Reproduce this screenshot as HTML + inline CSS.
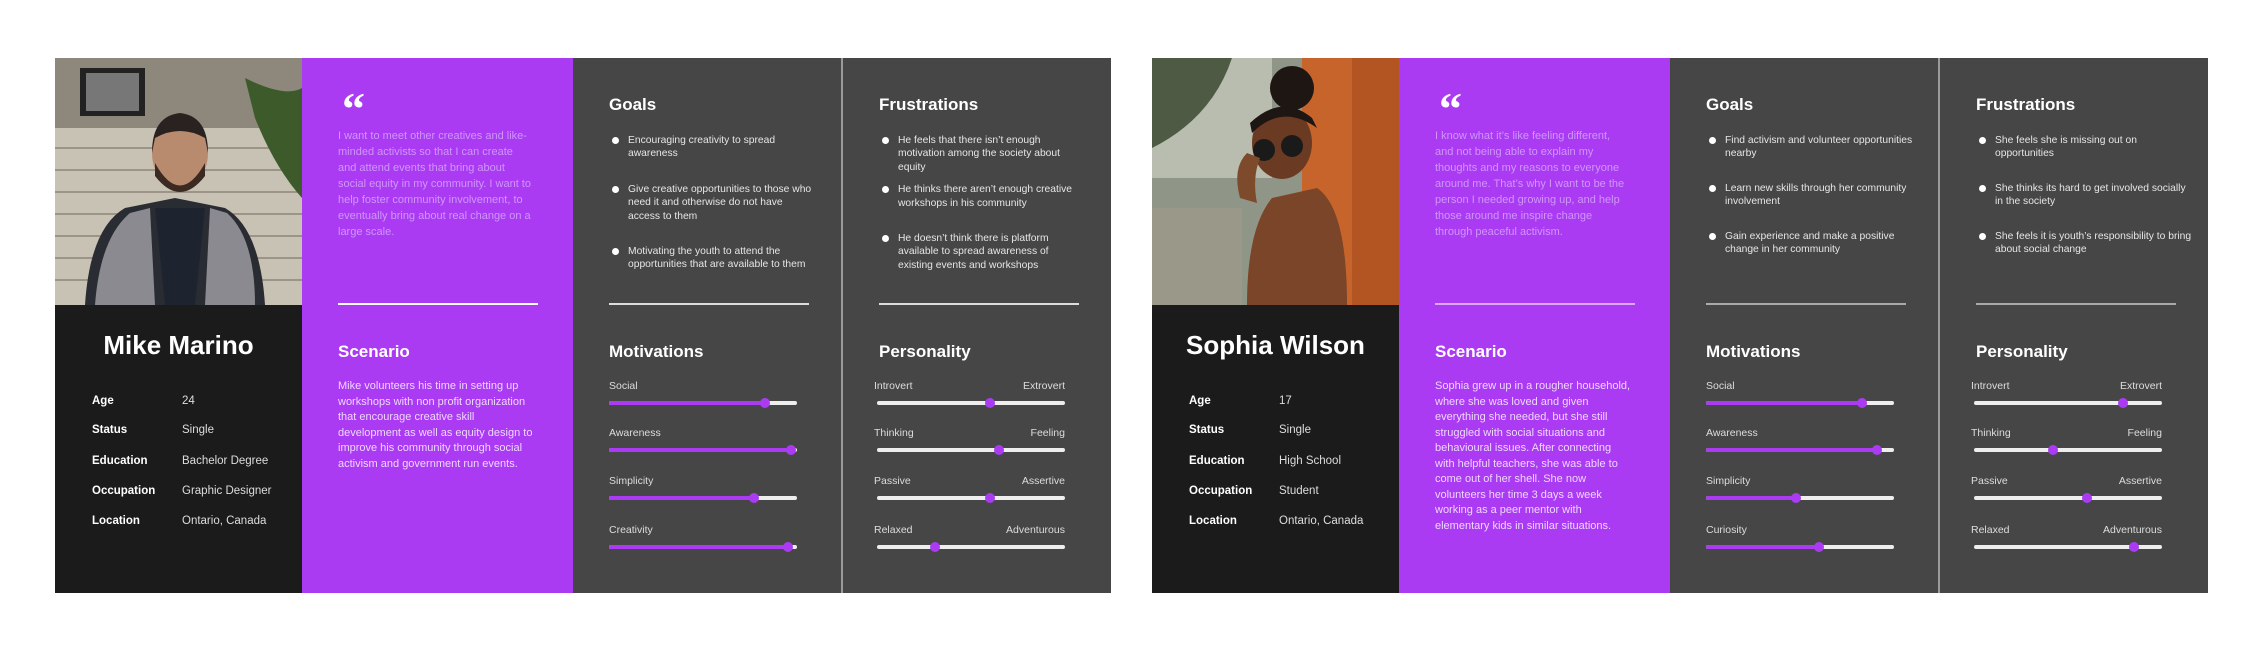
<!DOCTYPE html>
<html><head><meta charset="utf-8"><style>
*{margin:0;padding:0;box-sizing:border-box}
body{width:2262px;height:653px;background:#fff;position:relative;overflow:hidden;font-family:"Liberation Sans",sans-serif}
.card{position:absolute;top:58px;width:1056px;height:535px}
.col{position:absolute;top:0;height:535px}
.photo{left:0;width:247px;height:247px;overflow:hidden}
.info{left:0;top:247px;width:247px;height:288px;background:#1b1b1b}
.pur{left:247px;width:271px;background:#aa3bf3}
.g{left:518px;width:268px;background:#464646}
.sep{left:786px;width:2px;background:#9a9a9a}
.f{left:788px;width:268px;background:#464646}
.a{position:absolute;white-space:nowrap}
.name{left:0;width:247px;text-align:center;top:25px;font-size:26px;font-weight:bold;color:#fff}
.lb{left:37px;font-size:11.5px;font-weight:bold;color:#fff}
.vl{left:127px;font-size:11.5px;color:#ddd}
.q{left:40px;top:28px;font-size:46px;font-weight:bold;color:#fff;font-family:"Liberation Serif",serif;line-height:46px}
.qt{left:36px;top:70px;width:196px;white-space:normal;font-size:11px;line-height:16px;color:#d095fa}
.hr{position:absolute;left:36px;width:200px;top:245px;height:1.5px;background:#fff}
.h{font-size:17px;font-weight:bold;color:#fff}
.st{left:36px;top:321px;width:196px;white-space:normal;font-size:11px;line-height:15.5px;color:#efd6ff}
ul{position:absolute;left:39px;width:205px;list-style:none}
li{position:relative;padding-left:16px;font-size:10.3px;line-height:13.4px;color:#e6e6e6}
li:before{content:"";position:absolute;left:0;top:3px;width:7px;height:7px;border-radius:50%;background:#fff}
.sl{position:absolute;font-size:10.5px;color:#ddd}
.tr{position:absolute;height:4px;border-radius:2px;background:#eee}
.fill{position:absolute;left:0;top:0;height:4px;border-radius:2px;background:#aa3bf3}
.kn{position:absolute;top:-3px;width:10px;height:10px;margin-left:-5px;border-radius:50%;background:#aa3bf3}
</style></head><body>

<!-- Card 1 -->
<div class="card" style="left:55px">
 <div class="col photo">
  <svg width="247" height="247" viewBox="0 0 247 247">
   <rect width="247" height="247" fill="#8e877c"/>
   <rect x="0" y="70" width="247" height="177" fill="#c8c2b4"/>
   <g stroke="#9c9486" stroke-width="2">
    <line x1="0" y1="90" x2="247" y2="90"/><line x1="0" y1="112" x2="247" y2="112"/><line x1="0" y1="134" x2="247" y2="134"/><line x1="0" y1="156" x2="247" y2="156"/><line x1="0" y1="178" x2="247" y2="178"/><line x1="0" y1="200" x2="247" y2="200"/><line x1="0" y1="222" x2="247" y2="222"/>
   </g>
   <rect x="25" y="10" width="65" height="48" fill="#222"/><rect x="31" y="15" width="53" height="38" fill="#777"/>
   <path d="M190 20 Q230 40 247 30 L247 140 Q220 110 200 60Z" fill="#3d5a2a"/>
   <path d="M30 247 Q35 170 70 150 L120 140 L170 150 Q205 170 210 247Z" fill="#2a2c33"/>
   <path d="M40 247 Q45 180 75 155 L95 150 L100 247Z M150 247 L155 150 L172 155 Q200 180 200 247Z" fill="#8a8a90"/>
   <path d="M100 150 L150 150 L140 247 L110 247Z" fill="#1d2430"/>
   <ellipse cx="125" cy="95" rx="28" ry="36" fill="#b88b6e"/>
   <path d="M97 95 Q97 58 125 55 Q153 58 153 95 L150 80 Q125 66 100 80Z" fill="#2a2220"/>
   <path d="M100 105 Q125 150 150 105 L150 118 Q125 150 100 118Z" fill="#3a2a22"/>
  </svg>
 </div>
 <div class="col info">
  <div class="a name">Mike Marino</div>
  <div class="a lb" style="top:90px">Age</div><div class="a vl" style="top:90px">24</div>
  <div class="a lb" style="top:119px">Status</div><div class="a vl" style="top:119px">Single</div>
  <div class="a lb" style="top:150px">Education</div><div class="a vl" style="top:150px">Bachelor Degree</div>
  <div class="a lb" style="top:180px">Occupation</div><div class="a vl" style="top:180px">Graphic Designer</div>
  <div class="a lb" style="top:210px">Location</div><div class="a vl" style="top:210px">Ontario, Canada</div>
 </div>
 <div class="col pur">
  <div class="a q">&ldquo;</div>
  <div class="a qt">I want to meet other creatives and like-minded activists so that I can create and attend events that bring about social equity in my community. I want to help foster community involvement, to eventually bring about real change on a large scale.</div>
  <div class="hr"></div>
  <div class="a h" style="left:36px;top:284px">Scenario</div>
  <div class="a st">Mike volunteers his time in setting up workshops with non profit organization that encourage creative skill development as well as equity design to improve his community through social activism and government run events.</div>
 </div>
 <div class="col g">
  <div class="a h" style="left:36px;top:37px">Goals</div>
  <ul style="top:76px">
   <li style="margin-bottom:22px">Encouraging creativity to spread awareness</li>
   <li style="margin-bottom:22px">Give creative opportunities to those who need it and otherwise do not have access to them</li>
   <li>Motivating the youth to attend the opportunities that are available to them</li>
  </ul>
  <div class="hr" style="background:#ddd"></div>
  <div class="a h" style="left:36px;top:284px">Motivations</div>
  <div class="sl" style="left:36px;top:322px">Social</div><div class="tr" style="left:36px;top:343px;width:188px"><div class="fill" style="width:83%"></div><div class="kn" style="left:83%"></div></div>
  <div class="sl" style="left:36px;top:369px">Awareness</div><div class="tr" style="left:36px;top:390px;width:188px"><div class="fill" style="width:97%"></div><div class="kn" style="left:97%"></div></div>
  <div class="sl" style="left:36px;top:417px">Simplicity</div><div class="tr" style="left:36px;top:438px;width:188px"><div class="fill" style="width:77%"></div><div class="kn" style="left:77%"></div></div>
  <div class="sl" style="left:36px;top:466px">Creativity</div><div class="tr" style="left:36px;top:487px;width:188px"><div class="fill" style="width:95%"></div><div class="kn" style="left:95%"></div></div>
 </div>
 <div class="col sep"></div>
 <div class="col f">
  <div class="a h" style="left:36px;top:37px">Frustrations</div>
  <ul style="top:76px;width:200px">
   <li style="margin-bottom:9px">He feels that there isn’t enough motivation among the society about equity</li>
   <li style="margin-bottom:22px">He thinks there aren’t enough creative workshops in his community</li>
   <li>He doesn’t think there is platform available to spread awareness of existing events and workshops</li>
  </ul>
  <div class="hr" style="background:#ddd"></div>
  <div class="a h" style="left:36px;top:284px">Personality</div>
  <div class="sl" style="left:31px;top:322px">Introvert</div><div class="sl" style="left:160px;width:62px;text-align:right;top:322px">Extrovert</div>
  <div class="tr" style="left:34px;top:343px;width:188px"><div class="kn" style="left:60%"></div></div>
  <div class="sl" style="left:31px;top:369px">Thinking</div><div class="sl" style="left:160px;width:62px;text-align:right;top:369px">Feeling</div>
  <div class="tr" style="left:34px;top:390px;width:188px"><div class="kn" style="left:65%"></div></div>
  <div class="sl" style="left:31px;top:417px">Passive</div><div class="sl" style="left:160px;width:62px;text-align:right;top:417px">Assertive</div>
  <div class="tr" style="left:34px;top:438px;width:188px"><div class="kn" style="left:60%"></div></div>
  <div class="sl" style="left:31px;top:466px">Relaxed</div><div class="sl" style="left:140px;width:82px;text-align:right;top:466px">Adventurous</div>
  <div class="tr" style="left:34px;top:487px;width:188px"><div class="kn" style="left:31%"></div></div>
 </div>
</div>

<!-- Card 2 -->
<div class="card" style="left:1152px">
 <div class="col photo">
  <svg width="247" height="247" viewBox="0 0 247 247">
   <rect width="247" height="247" fill="#8f9688"/>
   <rect x="0" y="0" width="120" height="120" fill="#b8bdb0"/>
   <path d="M0 0 L80 0 Q60 60 0 90Z" fill="#4e5a44"/>
   <rect x="0" y="150" width="90" height="97" fill="#9a9888"/>
   <rect x="150" y="0" width="97" height="247" fill="#c7642b"/>
   <rect x="200" y="0" width="47" height="247" fill="#b35522"/>
   <path d="M95 247 Q95 170 120 140 L165 130 Q195 150 195 247Z" fill="#7a4528"/>
   <ellipse cx="130" cy="85" rx="30" ry="36" fill="#6b3a22"/>
   <circle cx="140" cy="30" r="22" fill="#1e1613"/>
   <path d="M100 75 Q130 45 165 70 L160 60 Q130 35 98 65Z" fill="#1e1613"/>
   <circle cx="112" cy="92" r="11" fill="#1a1a1a"/><circle cx="140" cy="88" r="11" fill="#1a1a1a"/>
   <path d="M88 140 Q80 110 95 95 L108 100 Q100 120 105 145Z" fill="#7d4a2c"/>
  </svg>
 </div>
 <div class="col info">
  <div class="a name">Sophia Wilson</div>
  <div class="a lb" style="top:90px">Age</div><div class="a vl" style="top:90px">17</div>
  <div class="a lb" style="top:119px">Status</div><div class="a vl" style="top:119px">Single</div>
  <div class="a lb" style="top:150px">Education</div><div class="a vl" style="top:150px">High School</div>
  <div class="a lb" style="top:180px">Occupation</div><div class="a vl" style="top:180px">Student</div>
  <div class="a lb" style="top:210px">Location</div><div class="a vl" style="top:210px">Ontario, Canada</div>
 </div>
 <div class="col pur">
  <div class="a q">&ldquo;</div>
  <div class="a qt">I know what it’s like feeling different, and not being able to explain my thoughts and my reasons to everyone around me. That’s why I want to be the person I needed growing up, and help those around me inspire change through peaceful activism.</div>
  <div class="hr" style="background:#d9a8fb"></div>
  <div class="a h" style="left:36px;top:284px">Scenario</div>
  <div class="a st">Sophia grew up in a rougher household, where she was loved and given everything she needed, but she still struggled with social situations and behavioural issues. After connecting with helpful teachers, she was able to come out of her shell. She now volunteers her time 3 days a week working as a peer mentor with elementary kids in similar situations.</div>
 </div>
 <div class="col g">
  <div class="a h" style="left:36px;top:37px">Goals</div>
  <ul style="top:76px">
   <li style="margin-bottom:21px">Find activism and volunteer opportunities nearby</li>
   <li style="margin-bottom:21px">Learn new skills through her community involvement</li>
   <li>Gain experience and make a positive change in her community</li>
  </ul>
  <div class="hr" style="background:#aaa"></div>
  <div class="a h" style="left:36px;top:284px">Motivations</div>
  <div class="sl" style="left:36px;top:322px">Social</div><div class="tr" style="left:36px;top:343px;width:188px"><div class="fill" style="width:83%"></div><div class="kn" style="left:83%"></div></div>
  <div class="sl" style="left:36px;top:369px">Awareness</div><div class="tr" style="left:36px;top:390px;width:188px"><div class="fill" style="width:91%"></div><div class="kn" style="left:91%"></div></div>
  <div class="sl" style="left:36px;top:417px">Simplicity</div><div class="tr" style="left:36px;top:438px;width:188px"><div class="fill" style="width:48%"></div><div class="kn" style="left:48%"></div></div>
  <div class="sl" style="left:36px;top:466px">Curiosity</div><div class="tr" style="left:36px;top:487px;width:188px"><div class="fill" style="width:60%"></div><div class="kn" style="left:60%"></div></div>
 </div>
 <div class="col sep"></div>
 <div class="col f">
  <div class="a h" style="left:36px;top:37px">Frustrations</div>
  <ul style="top:76px;width:215px">
   <li style="margin-bottom:21px">She feels she is missing out on opportunities</li>
   <li style="margin-bottom:21px">She thinks its hard to get involved socially in the society</li>
   <li>She feels it is youth’s responsibility to bring about social change</li>
  </ul>
  <div class="hr" style="background:#aaa"></div>
  <div class="a h" style="left:36px;top:284px">Personality</div>
  <div class="sl" style="left:31px;top:322px">Introvert</div><div class="sl" style="left:160px;width:62px;text-align:right;top:322px">Extrovert</div>
  <div class="tr" style="left:34px;top:343px;width:188px"><div class="kn" style="left:79%"></div></div>
  <div class="sl" style="left:31px;top:369px">Thinking</div><div class="sl" style="left:160px;width:62px;text-align:right;top:369px">Feeling</div>
  <div class="tr" style="left:34px;top:390px;width:188px"><div class="kn" style="left:42%"></div></div>
  <div class="sl" style="left:31px;top:417px">Passive</div><div class="sl" style="left:160px;width:62px;text-align:right;top:417px">Assertive</div>
  <div class="tr" style="left:34px;top:438px;width:188px"><div class="kn" style="left:60%"></div></div>
  <div class="sl" style="left:31px;top:466px">Relaxed</div><div class="sl" style="left:140px;width:82px;text-align:right;top:466px">Adventurous</div>
  <div class="tr" style="left:34px;top:487px;width:188px"><div class="kn" style="left:85%"></div></div>
 </div>
</div>
</body></html>
